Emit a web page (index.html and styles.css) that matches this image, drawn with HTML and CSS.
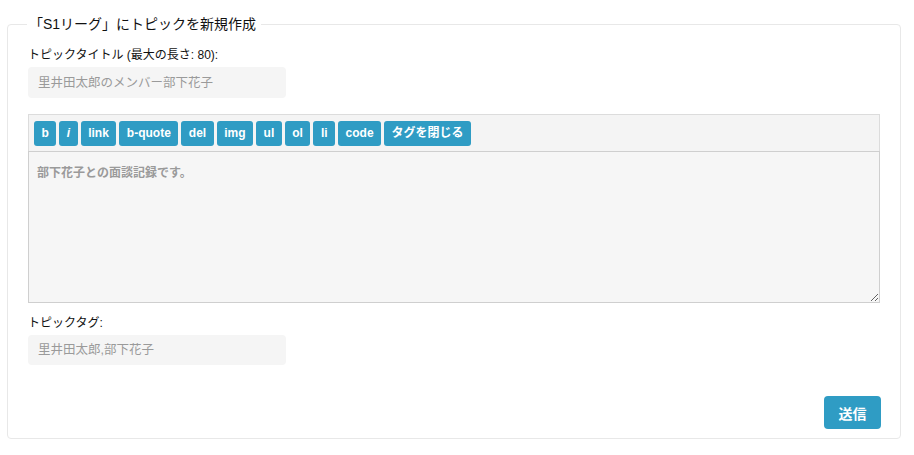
FILE: index.html
```html
<!DOCTYPE html>
<html lang="ja">
<head>
<meta charset="utf-8">
<title>新規作成</title>
<link rel="stylesheet" href="styles.css">
</head>
<body>
<div class="page">
  <fieldset class="panel">
    <legend class="panel-title">「S1リーグ」にトピックを新規作成</legend>
    <label class="field-label">トピックタイトル (最大の長さ: 80):</label>
    <input class="text-input" type="text" placeholder="里井田太郎のメンバー部下花子">
    <div class="editor">
      <div class="toolbar">
        <button class="tb-btn">b</button>
        <button class="tb-btn italic">i</button>
        <button class="tb-btn">link</button>
        <button class="tb-btn">b-quote</button>
        <button class="tb-btn">del</button>
        <button class="tb-btn">img</button>
        <button class="tb-btn">ul</button>
        <button class="tb-btn">ol</button>
        <button class="tb-btn">li</button>
        <button class="tb-btn">code</button>
        <button class="tb-btn">タグを閉じる</button>
      </div>
      <textarea class="body-input" placeholder="部下花子との面談記録です。"></textarea>
    </div>
    <label class="field-label tag-label">トピックタグ:</label>
    <input class="text-input tag-input" type="text" placeholder="里井田太郎,部下花子">
    <div class="actions">
      <button class="submit">送信</button>
    </div>
  </fieldset>
</div>
</body>
</html>
```

FILE: styles.css
```css
* { box-sizing: border-box; }
html, body { margin: 0; padding: 0; background: #fff; }
body {
  font-family: "Liberation Sans", "Noto Sans CJK JP", sans-serif;
  color: #111;
}
.page { padding: 14px 13px 0 7px; }
.panel {
  margin: 0;
  border: 1px solid #e8e8e8;
  border-radius: 4px;
  padding: 14px 20px 9px 20px;
  min-width: 0;
}
.panel-title {
  font-size: 14px;
  line-height: 20px;
  padding: 0 5px 0 2px;
  margin-left: -1px;
  color: #111;
}
.field-label {
  display: block;
  font-size: 12px;
  line-height: 14px;
  margin-bottom: 5px;
  font-weight: normal;
}
.text-input {
  display: block;
  width: 258px;
  height: 31px;
  border: none;
  border-radius: 4px;
  background: #f5f5f5;
  padding: 0 10px;
  font-family: inherit;
  font-size: 12.5px;
  color: #333;
  outline: none;
}
.text-input::placeholder { color: #9a9a9a; }
.editor { margin-top: 16px; }
.toolbar {
  display: flex;
  gap: 3px;
  background: #f4f4f4;
  border: 1px solid #dcdcdc;
  border-bottom: none;
  padding: 6px 5px 5px;
}
.tb-btn {
  height: 25px;
  padding: 0 7.5px;
  border: none;
  border-radius: 3px;
  background: #2f9cc4;
  color: #fff;
  font-family: inherit;
  font-size: 12px;
  font-weight: bold;
  line-height: 25px;
}
.tb-btn.italic { font-style: italic; min-width: 18px; }
.body-input {
  display: block;
  width: 100%;
  height: 152px;
  margin: 0;
  border: 1px solid #cfcfcf;
  background: #f6f6f6;
  padding: 11px 8px;
  font-family: inherit;
  font-size: 12px;
  font-weight: bold;
  resize: vertical;
  outline: none;
}
.body-input::placeholder { color: #9a9a9a; }
.tag-label { margin-top: 13px; margin-bottom: 5px; }
.tag-input { height: 30px; }
.actions {
  display: flex;
  justify-content: flex-end;
  margin-top: 31px;
}
.submit {
  width: 57px;
  height: 33px;
  border: none;
  border-radius: 4px;
  background: #2f9cc4;
  color: #fff;
  font-family: inherit;
  font-size: 14px;
  font-weight: bold;
  margin-right: -1px;
}
```
